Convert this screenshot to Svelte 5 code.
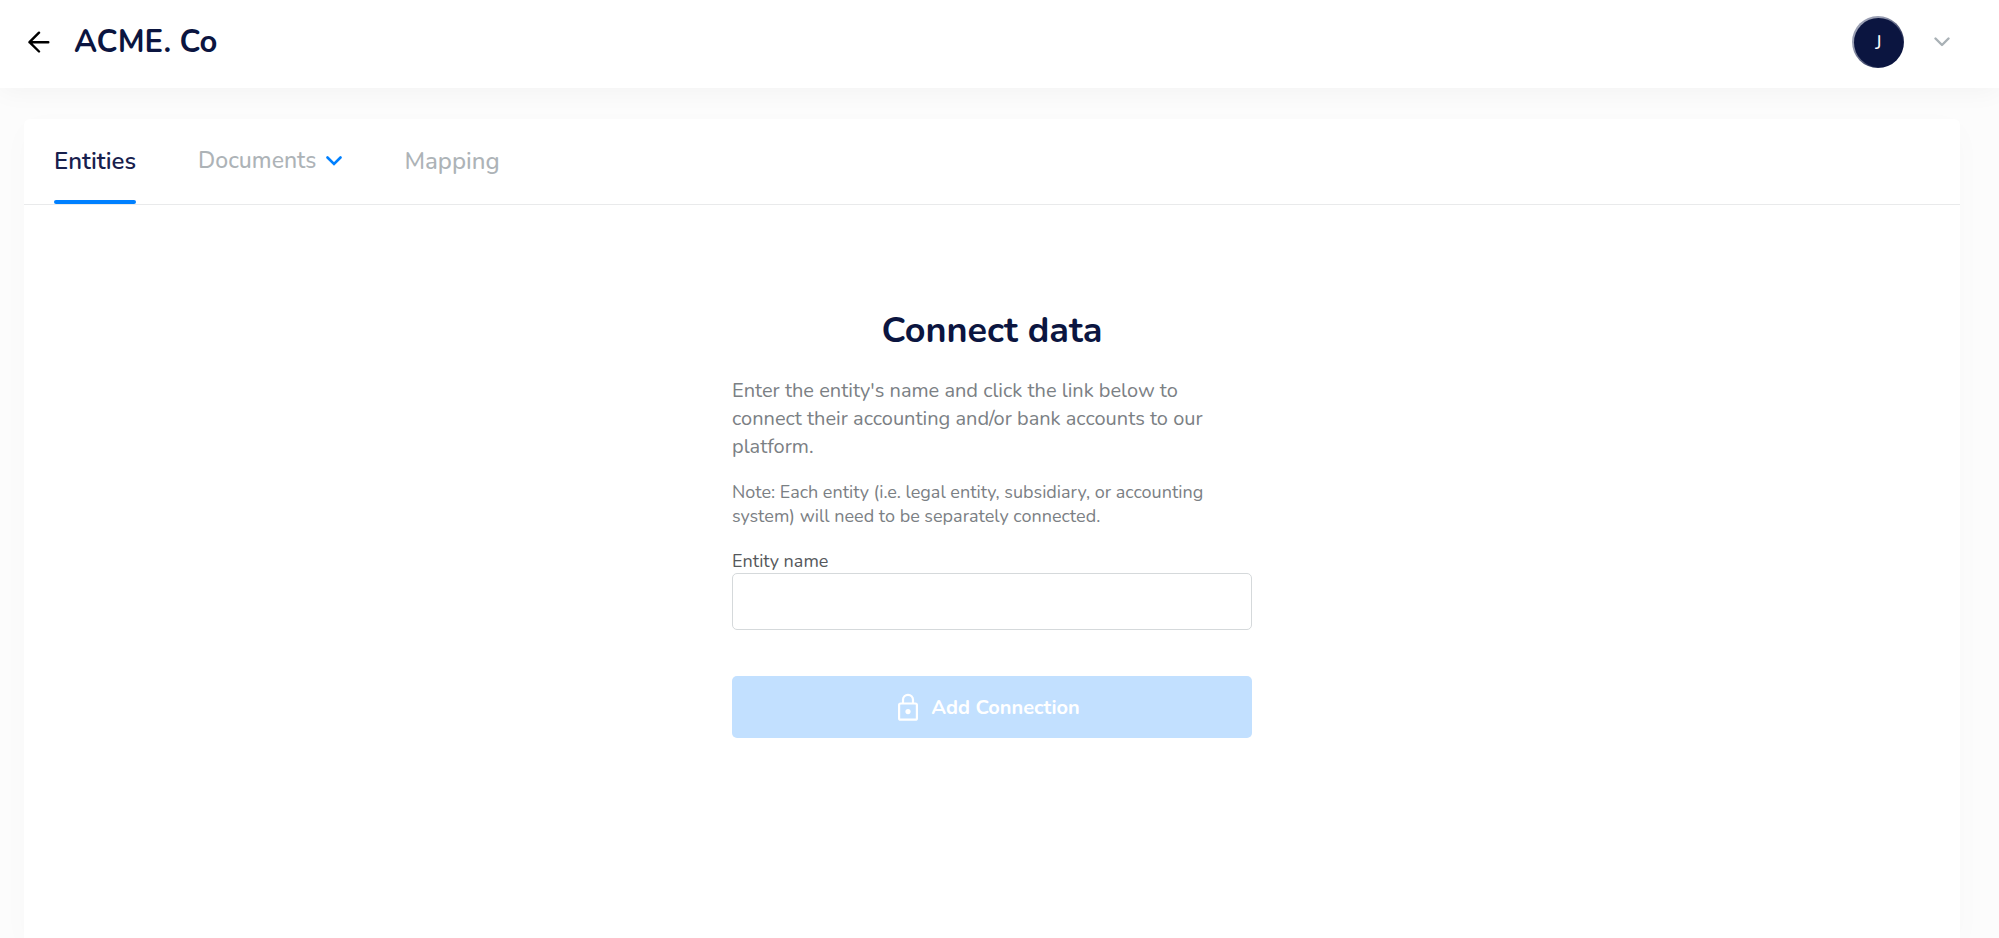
<script>
  let entityName = $state('');
</script>

<div class="page">
  <header class="topbar">
    <div class="brand">
      <button class="plain back" type="button" aria-label="Back">
        <svg width="22" height="22" viewBox="0 0 22 22" fill="none" stroke="#000" stroke-width="2.4" stroke-linecap="round" stroke-linejoin="round">
          <path d="M20.3 11.2H1.5M11 1.7 1.5 11.2 11 20.5" />
        </svg>
      </button>
      <h1>ACME. Co</h1>
    </div>
    <button class="plain account" type="button" aria-label="Account menu">
      <span class="avatar"><span class="initial">J</span></span>
      <svg width="16" height="10" viewBox="0 0 16 10" fill="none" stroke="#a9b1b6" stroke-width="2.4" stroke-linecap="round" stroke-linejoin="round">
        <path d="M1.5 1.5 8 8l6.500-6.500" />
      </svg>
    </button>
  </header>

  <main class="card">
    <nav class="tabs">
      <a class="tab active" href="#entities">Entities</a>
      <a class="tab menu" href="#documents">
        Documents
        <svg width="16" height="10" viewBox="0 0 16 10" fill="none" stroke="#0080ff" stroke-width="2.6" stroke-linecap="round">
          <path d="M1.500 1.500 8 8l6.500-6.500" />
        </svg>
      </a>
      <a class="tab" href="#mapping">Mapping</a>
    </nav>

    <form class="connect" onsubmit={(event) => event.preventDefault()}>
      <h2>Connect data</h2>
      <p class="lead">
        Enter the entity's name and click the link below to connect their accounting and/or bank accounts to our platform.
      </p>
      <p class="note">
        Note: Each entity (i.e. legal entity, subsidiary, or accounting system) will need to be separately connected.
      </p>
      <label for="entity-name">Entity name</label>
      <input id="entity-name" type="text" bind:value={entityName} />
      <button class="submit" type="submit" disabled={!entityName}>
        <svg width="20" height="28" viewBox="0 0 20 28" fill="none" stroke="#fff" stroke-width="2.200">
          <rect x="1.1" y="10.500" width="17.800" height="16.200" rx="1.500" />
          <path d="M5 10V6.800a5 5 0 0 1 10 0V10" />
          <circle cx="10" cy="18.600" r="2.600" fill="#fff" stroke="none" />
        </svg>
        Add Connection
      </button>
    </form>
  </main>
</div>

<style>
  :global(body) {
    background: #fcfcfc;
  }

  .page {
    box-sizing: border-box;
    display: flex;
    flex-direction: column;
    min-height: 100vh;
    font-family: Nunito, Lato, sans-serif;
    color: #0b1540;
  }

  .plain {
    padding: 0;
    border: 0;
    background: none;
    font: inherit;
    cursor: pointer;
  }

  .topbar {
    box-sizing: border-box;
    display: flex;
    align-items: center;
    justify-content: space-between;
    height: 88px;
    padding: 0 49px 4px 28px;
    background: #fff;
    box-shadow: 0 4px 24px rgba(0, 0, 0, 0.04);
  }

  .brand,
  .account {
    display: flex;
    align-items: center;
  }

  .brand {
    gap: 24px;
  }

  .back {
    display: flex;
  }

  .account {
    gap: 30px;
  }

  h1,
  h2,
  p {
    margin: 0;
  }

  h1 {
    font-size: 31px;
    line-height: 40px;
    font-weight: 700;
  }

  .avatar {
    box-sizing: border-box;
    display: grid;
    width: 52px;
    height: 52px;
    padding: 2px 1px 1px 2px;
    border-radius: 50%;
    background: linear-gradient(135deg, #9a9fb3 30%, #0b1540 80%);
  }

  .initial {
    display: grid;
    place-items: center;
    border-radius: 50%;
    background: #0b1540;
    color: #fff;
    font-size: 20px;
  }

  .card {
    flex: 1;
    margin: 31px 39px 0 24px;
    border-radius: 6px 6px 0 0;
    background: #fff;
    box-shadow: 0 8px 32px rgba(0, 0, 0, 0.02);
  }

  .tabs {
    display: flex;
    gap: 62px;
    padding: 0 30px;
    border-bottom: 1px solid #e9eaeb;
  }

  .tab {
    box-sizing: border-box;
    position: relative;
    display: flex;
    align-items: center;
    gap: 10px;
    height: 85px;
    padding-bottom: 2px;
    color: #adb3b7;
    font-size: 24px;
    line-height: 32px;
    font-weight: 500;
    text-decoration: none;
  }

  .tab.menu {
    font-size: 23px;
  }

  .tab.active {
    color: #17204d;
    font-weight: 600;
  }

  .tab.active::after {
    content: '';
    position: absolute;
    right: 0;
    bottom: 0;
    left: 0;
    height: 4px;
    border-radius: 2px;
    background: #0080ff;
  }

  .connect {
    display: flex;
    flex-direction: column;
    width: 520px;
    max-width: 100%;
    margin: 0 auto;
    padding: 102px 0 40px;
  }

  h2 {
    font-size: 36px;
    line-height: 48px;
    font-weight: 700;
    text-align: center;
  }

  .lead {
    margin-top: 22px;
    color: #7b8084;
    font-size: 20px;
    line-height: 28px;
  }

  .note {
    margin-top: 19px;
    color: #7b8084;
    font-size: 18px;
    line-height: 24px;
  }

  label {
    margin-top: 21px;
    color: #55585b;
    font-size: 18px;
    line-height: 24px;
  }

  input {
    box-sizing: border-box;
    height: 57px;
    padding: 0 16px;
    border: 1px solid #d5d9db;
    border-radius: 5px;
    background: #fff;
    color: inherit;
    font: inherit;
    font-size: 20px;
  }

  .submit {
    display: flex;
    align-items: center;
    justify-content: center;
    gap: 13px;
    height: 62px;
    margin-top: 46px;
    padding: 0 6px 0 0;
    border: 0;
    border-radius: 5px;
    background: #c2e0ff;
    color: #fff;
    font-family: inherit;
    font-size: 20px;
    font-weight: 700;
  }
</style>
